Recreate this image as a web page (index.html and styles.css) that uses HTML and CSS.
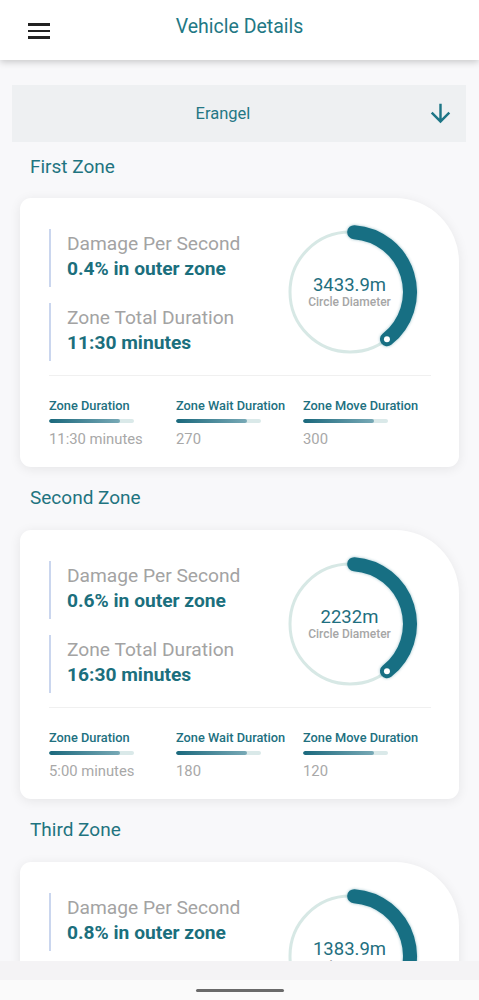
FILE: index.html
```html
<!DOCTYPE html>
<html>
<head>
<meta charset="utf-8">
<link rel="stylesheet" href="styles.css">
</head>
<body>
<div class="screen">
  <header class="topbar">
    <div class="menu"><span></span><span></span><span></span></div>
    <h1 class="title">Vehicle Details</h1>
  </header>
  <main class="scroll">
    <div class="dropdown">
      <span class="dd-text">Erangel</span>
      <svg class="dd-arrow" viewBox="0 0 24 24" width="29" height="29"><path d="M20 12l-1.41-1.41L13 16.17V4h-2v12.17l-5.58-5.59L4 12l8 8 8-8z" fill="#1d7586"/></svg>
    </div>

    <h2 class="zone-title">First Zone</h2>
    <section class="card">
      <div class="top-row">
        <div class="info">
          <div class="block"><div class="lbl">Damage Per Second</div><div class="val">0.4% in outer zone</div></div>
          <div class="block"><div class="lbl">Zone Total Duration</div><div class="val">11:30 minutes</div></div>
        </div>
        <div class="ring">
          <svg viewBox="0 0 140 140" width="140" height="140">
            <circle cx="70" cy="70" r="60" fill="none" stroke="#d7e8e5" stroke-width="3"/>
            <path class="arc" d="M74.19 10.15 A60 60 0 0 1 106.94 117.28" fill="none" stroke="#176f83" stroke-width="14" stroke-linecap="round"/>
            <circle cx="106.94" cy="117.28" r="3" fill="#fff"/>
          </svg>
          <div class="ring-text"><div class="dia">3433.9m</div><div class="dia-lbl">Circle Diameter</div></div>
        </div>
      </div>
      <div class="divider"></div>
      <div class="stats">
        <div class="stat"><div class="s-lbl">Zone Duration</div><div class="bar"><div class="fill"></div></div><div class="s-val">11:30 minutes</div></div>
        <div class="stat"><div class="s-lbl">Zone Wait Duration</div><div class="bar"><div class="fill"></div></div><div class="s-val">270</div></div>
        <div class="stat"><div class="s-lbl">Zone Move Duration</div><div class="bar"><div class="fill"></div></div><div class="s-val">300</div></div>
      </div>
    </section>

    <h2 class="zone-title">Second Zone</h2>
    <section class="card">
      <div class="top-row">
        <div class="info">
          <div class="block"><div class="lbl">Damage Per Second</div><div class="val">0.6% in outer zone</div></div>
          <div class="block"><div class="lbl">Zone Total Duration</div><div class="val">16:30 minutes</div></div>
        </div>
        <div class="ring">
          <svg viewBox="0 0 140 140" width="140" height="140">
            <circle cx="70" cy="70" r="60" fill="none" stroke="#d7e8e5" stroke-width="3"/>
            <path class="arc" d="M74.19 10.15 A60 60 0 0 1 106.94 117.28" fill="none" stroke="#176f83" stroke-width="14" stroke-linecap="round"/>
            <circle cx="106.94" cy="117.28" r="3" fill="#fff"/>
          </svg>
          <div class="ring-text"><div class="dia">2232m</div><div class="dia-lbl">Circle Diameter</div></div>
        </div>
      </div>
      <div class="divider"></div>
      <div class="stats">
        <div class="stat"><div class="s-lbl">Zone Duration</div><div class="bar"><div class="fill"></div></div><div class="s-val">5:00 minutes</div></div>
        <div class="stat"><div class="s-lbl">Zone Wait Duration</div><div class="bar"><div class="fill"></div></div><div class="s-val">180</div></div>
        <div class="stat"><div class="s-lbl">Zone Move Duration</div><div class="bar"><div class="fill"></div></div><div class="s-val">120</div></div>
      </div>
    </section>

    <h2 class="zone-title">Third Zone</h2>
    <section class="card">
      <div class="top-row">
        <div class="info">
          <div class="block"><div class="lbl">Damage Per Second</div><div class="val">0.8% in outer zone</div></div>
          <div class="block"><div class="lbl">Zone Total Duration</div><div class="val">20:00 minutes</div></div>
        </div>
        <div class="ring">
          <svg viewBox="0 0 140 140" width="140" height="140">
            <circle cx="70" cy="70" r="60" fill="none" stroke="#d7e8e5" stroke-width="3"/>
            <path class="arc" d="M74.19 10.15 A60 60 0 0 1 106.94 117.28" fill="none" stroke="#176f83" stroke-width="14" stroke-linecap="round"/>
            <circle cx="106.94" cy="117.28" r="3" fill="#fff"/>
          </svg>
          <div class="ring-text"><div class="dia">1383.9m</div><div class="dia-lbl">Circle Diameter</div></div>
        </div>
      </div>
    </section>
  </main>
  <footer class="navbar"><div class="handle"></div></footer>
</div>
</body>
</html>
```

FILE: styles.css
```css
* { box-sizing: border-box; }
html, body { margin: 0; padding: 0; }
body {
  background: #f8f8fa;
  font-family: Roboto, "Noto Sans", "Liberation Sans", sans-serif;
}
.screen {
  width: 479px;
  height: 1000px;
  display: flex;
  flex-direction: column;
  overflow: hidden;
}
.topbar {
  height: 60px;
  flex: none;
  background: #fff;
  position: relative;
  z-index: 2;
  box-shadow: 0 2px 7px rgba(0,0,0,0.2);
  display: flex;
  justify-content: center;
}
.menu {
  position: absolute;
  left: 28px;
  top: 23px;
  width: 22px;
  display: flex;
  flex-direction: column;
  gap: 4px;
}
.menu span {
  display: block;
  height: 2.5px;
  background: #222;
}
.title {
  margin: 0;
  padding-top: 15px;
  font-size: 19.5px;
  line-height: 24px;
  font-weight: 400;
  color: #227884;
}
.scroll {
  flex: none;
  height: 901px;
  overflow: hidden;
  padding-top: 25px;
}
.dropdown {
  margin: 0 13px 0 12px;
  height: 57px;
  background: #eef0f2;
  display: flex;
  align-items: center;
  padding-right: 11px;
}
.dd-text {
  flex: 1;
  text-align: center;
  padding-left: 8px;
  font-size: 16.5px;
  color: #247784;
}
.dd-arrow { flex: none; }
.zone-title {
  margin: 13px 0 19px 30px;
  font-size: 19px;
  line-height: 24px;
  font-weight: 400;
  color: #1f7480;
}
.card + .zone-title { margin: 19px 0 20px 30px; }
.card {
  margin: 0 20px;
  width: 439px;
  background: #fff;
  border-radius: 11px 64px 11px 11px;
  box-shadow: 0 2px 12px rgba(0,0,0,0.08);
  padding: 31px 28px 19px 29px;
}
.top-row {
  display: flex;
  justify-content: space-between;
  align-items: flex-start;
}
.info {
  display: flex;
  flex-direction: column;
  gap: 16px;
}
.block {
  border-left: 2px solid #cad6ee;
  padding: 2px 0 6px 16px;
}
.lbl {
  font-size: 19.2px;
  line-height: 25px;
  color: #a3a3a3;
}
.val {
  font-size: 19.2px;
  line-height: 25px;
  font-weight: 700;
  color: #1b6f7d;
}
.ring {
  display: grid;
  margin-top: -7px;
  margin-right: 11px;
  height: 140px;
  margin-bottom: -7px;
}
.ring > * { grid-area: 1 / 1; }
.arc { filter: drop-shadow(0 0 1.5px rgba(23,111,131,0.45)); }
.ring-text {
  align-self: center;
  justify-self: center;
  text-align: center;
  margin-right: 1px;
}
.dia {
  font-size: 18.5px;
  line-height: 20px;
  color: #1f6f80;
}
.dia-lbl {
  font-size: 12px;
  line-height: 15px;
  font-weight: 500;
  color: #a6a6a6;
}
.divider {
  height: 1px;
  background: #f0f0f0;
  margin-top: 14px;
}
.stats {
  display: grid;
  grid-template-columns: 127px 127px 127px;
  margin-top: 22px;
}
.s-lbl {
  font-size: 12.8px;
  line-height: 16px;
  font-weight: 500;
  color: #21707f;
  white-space: nowrap;
}
.bar {
  margin-top: 5px;
  width: 85px;
  height: 4px;
  border-radius: 2px;
  background: #dae9e9;
  overflow: hidden;
}
.fill {
  width: 83%;
  height: 100%;
  border-radius: 2px;
  background: linear-gradient(90deg, #1a687c, #78a9b6);
}
.s-val {
  margin-top: 7px;
  font-size: 14.8px;
  line-height: 18px;
  color: #a8a8a8;
}
.navbar {
  flex: none;
  height: 39px;
  background: linear-gradient(#f4f3f5 0 19px, #fafafa 19px);
  display: flex;
  justify-content: center;
  align-items: flex-end;
  padding-bottom: 8px;
}
.handle {
  width: 88px;
  height: 3px;
  border-radius: 2px;
  background: #6a6a6a;
}
```
